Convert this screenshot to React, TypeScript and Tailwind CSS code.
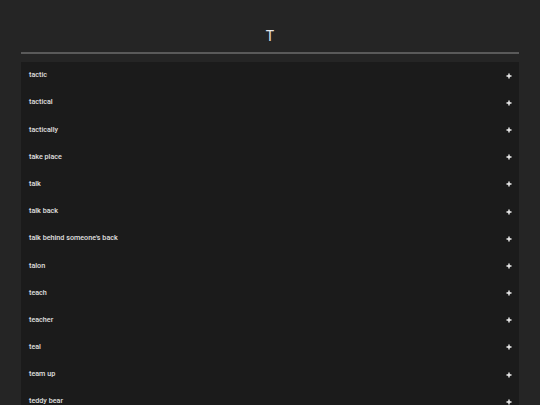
import React from "react";

const words = [
  "tactic",
  "tactical",
  "tactically",
  "take place",
  "talk",
  "talk back",
  "talk behind someone's back",
  "talon",
  "teach",
  "teacher",
  "teal",
  "team up",
  "teddy bear",
  "teen",
];

function Plus() {
  return (
    <svg width="6" height="6" viewBox="0 0 6 6" className="block">
      <path d="M3 0.5V5.5M0.5 3H5.5" stroke="#f2f2f2" strokeWidth="1.4" />
    </svg>
  );
}

export default function App() {
  return (
    <div
      className="min-h-[405px] w-full bg-[#252525] px-[21px] antialiased"
      style={{ fontFamily: "Roboto, 'Noto Sans', sans-serif" }}
    >
      <div className="flex h-[52px] items-center justify-center pt-[19px] text-[14px] leading-[20px] text-[#e6e6e6]">
        T
      </div>
      <div className="h-[2px] bg-[#5a5a5a]" />
      <div className="mt-[8px] bg-[#1b1b1b]">
        {words.map((w) => (
          <div
            key={w}
            className="flex h-[27.2px] items-center justify-between pl-[8px] pr-[7px] text-[7.2px] font-medium text-[#e0e0e0]"
          >
            <span>{w}</span>
            <Plus />
          </div>
        ))}
      </div>
    </div>
  );
}
